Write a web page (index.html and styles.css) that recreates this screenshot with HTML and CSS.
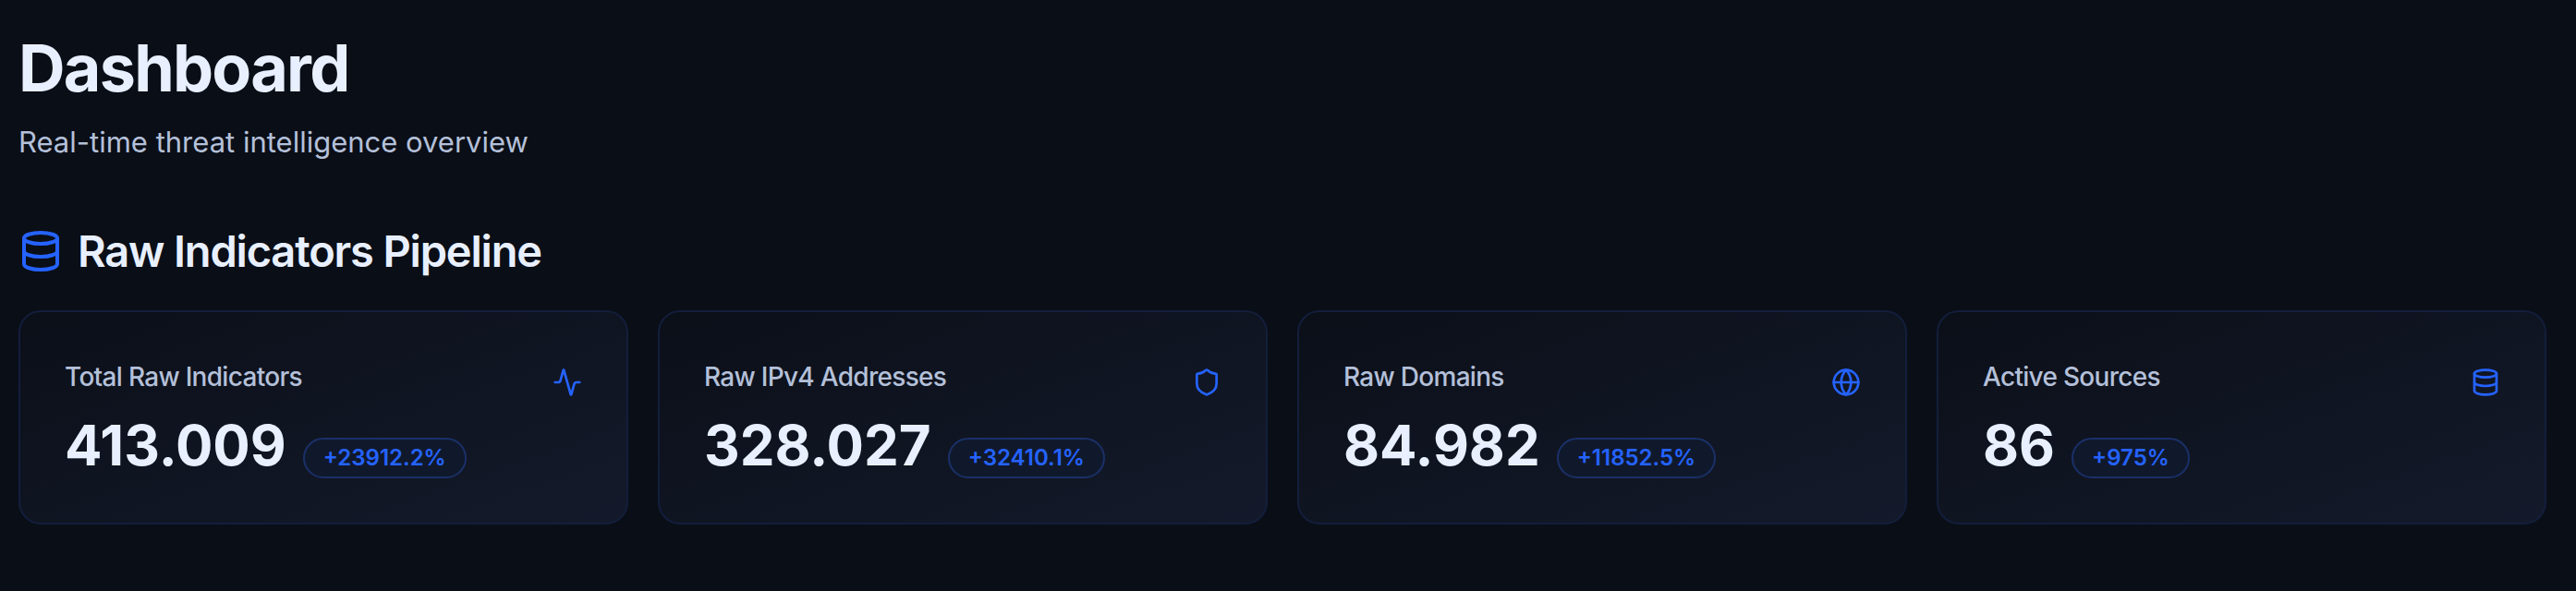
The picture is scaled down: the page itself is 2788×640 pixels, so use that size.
FILE: index.html
```html
<!DOCTYPE html>
<html lang="en">
    <head>
        <meta charset="utf-8">
        <meta name="viewport" content="width=device-width, initial-scale=1.0">
        <title>Dashboard</title>
        <link rel="stylesheet" href="styles.css">
    </head>
    <body>
        <main class="page">
            <header class="page-header">
                <h1>Dashboard</h1>
                <p>Real-time threat intelligence overview</p>
            </header>
            <section>
                <h2 class="section-title">
                    <svg class="icon icon-large" viewBox="0 0 24 24" aria-hidden="true">
                        <ellipse cx="12" cy="5" rx="9" ry="3"/>
                        <path d="M3 5V19A9 3 0 0 0 21 19V5"/>
                        <path d="M3 12A9 3 0 0 0 21 12"/>
                    </svg>
                    Raw Indicators Pipeline
                </h2>
                <div class="cards">
                    <article class="card">
                        <div>
                            <h3>Total Raw Indicators</h3>
                            <div class="stat">
                                <span class="value">413.009</span>
                                <span class="badge">+23912.2%</span>
                            </div>
                        </div>
                        <svg class="icon" viewBox="0 0 24 24" aria-hidden="true">
                            <path d="M22 12h-2.48a2 2 0 0 0-1.93 1.46l-2.35 8.36a.25.25 0 0 1-.48 0L9.24 2.18a.25.25 0 0 0-.48 0l-2.35 8.36A2 2 0 0 1 4.49 12H2"/>
                        </svg>
                    </article>
                    <article class="card">
                        <div>
                            <h3>Raw IPv4 Addresses</h3>
                            <div class="stat">
                                <span class="value">328.027</span>
                                <span class="badge">+32410.1%</span>
                            </div>
                        </div>
                        <svg class="icon" viewBox="0 0 24 24" aria-hidden="true">
                            <path d="M20 13c0 5-3.5 7.5-7.66 8.95a1 1 0 0 1-.67-.01C7.5 20.5 4 18 4 13V6a1 1 0 0 1 1-1c2 0 4.5-1.2 6.24-2.72a1.17 1.17 0 0 1 1.52 0C14.51 3.81 17 5 19 5a1 1 0 0 1 1 1z"/>
                        </svg>
                    </article>
                    <article class="card">
                        <div>
                            <h3>Raw Domains</h3>
                            <div class="stat">
                                <span class="value">84.982</span>
                                <span class="badge">+11852.5%</span>
                            </div>
                        </div>
                        <svg class="icon" viewBox="0 0 24 24" aria-hidden="true">
                            <circle cx="12" cy="12" r="10"/>
                            <path d="M12 2a14.5 14.5 0 0 0 0 20 14.5 14.5 0 0 0 0-20"/>
                            <path d="M2 12h20"/>
                        </svg>
                    </article>
                    <article class="card">
                        <div>
                            <h3>Active Sources</h3>
                            <div class="stat">
                                <span class="value">86</span>
                                <span class="badge">+975%</span>
                            </div>
                        </div>
                        <svg class="icon" viewBox="0 0 24 24" aria-hidden="true">
                            <ellipse cx="12" cy="5" rx="9" ry="3"/>
                            <path d="M3 5V19A9 3 0 0 0 21 19V5"/>
                            <path d="M3 12A9 3 0 0 0 21 12"/>
                        </svg>
                    </article>
                </div>
            </section>
        </main>
    </body>
</html>
```
FILE: styles.css
```css
* {
    box-sizing: border-box;
    margin: 0;
}

body {
    background-color: #0a0e17;
    color: #e8f0ff;
    font-family: Inter, sans-serif;
}

.page {
    padding: 34px 32px 64px 20px;
}

.page-header {
    margin-bottom: 62px;
}

h1 {
    font-size: 70px;
    line-height: 80px;
    font-weight: 700;
    letter-spacing: -0.025em;
    margin-bottom: 16px;
}

.page-header p {
    color: #b4c0d9;
    font-size: 31px;
    line-height: 48px;
}

.section-title {
    display: flex;
    align-items: center;
    gap: 16px;
    font-size: 47px;
    line-height: 64px;
    font-weight: 600;
    letter-spacing: -0.025em;
    margin-bottom: 32px;
}

.icon {
    flex: none;
    width: 32px;
    height: 32px;
    margin-top: 12px;
    fill: none;
    stroke: #2563ff;
    stroke-width: 2;
    stroke-linecap: round;
    stroke-linejoin: round;
}

.icon-large {
    width: 48px;
    height: 48px;
    margin-top: 0;
}

.cards {
    display: grid;
    grid-template-columns: repeat(4, 1fr);
    gap: 32px;
}

.card {
    display: flex;
    justify-content: space-between;
    align-items: flex-start;
    padding: 48px;
    border: 2px solid #131e3b;
    border-radius: 24px;
    background: linear-gradient(to bottom right, #0b0f18, #141a2b) border-box;
}

h3 {
    color: #b4c0d9;
    font-size: 28px;
    line-height: 44px;
    font-weight: 500;
    letter-spacing: -0.025em;
    margin-bottom: 16px;
}

.stat {
    display: flex;
    align-items: baseline;
    gap: 18px;
}

.value {
    font-size: 60px;
    line-height: 72px;
    font-weight: 700;
}

.badge {
    padding: 4px 20px;
    border: 2px solid #1a3068;
    border-radius: 24px;
    background-color: #10192c;
    color: #2563ff;
    font-size: 24px;
    line-height: 32px;
    font-weight: 600;
}
```
